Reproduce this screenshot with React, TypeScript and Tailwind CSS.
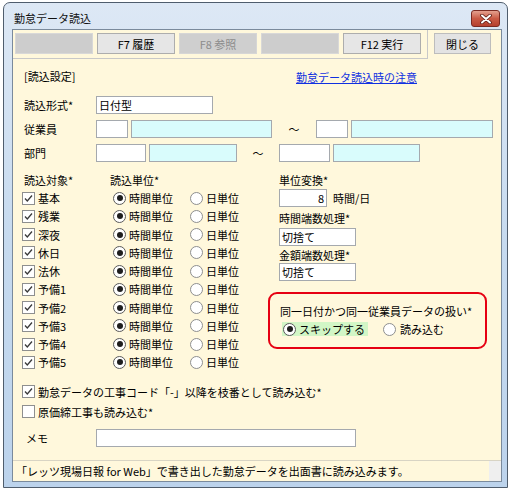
import React from 'react';

const FONT = '"Noto Sans CJK JP", "Liberation Sans", sans-serif';

function Check({ checked = true }: { checked?: boolean }) {
    return (
        <span className="w-[13px] h-[13px] border border-[#8e8f8f] bg-white flex items-center justify-center shrink-0">
            {checked && (
                <svg width="11" height="11" viewBox="0 0 11 11">
                    <path d="M2 5.5 L4.3 8 L9 2.5" fill="none" stroke="#3a3a3a" strokeWidth="1.3" />
                </svg>
            )}
        </span>
    );
}

function Radio({ checked = false }: { checked?: boolean }) {
    return (
        <span className={`w-[13px] h-[13px] rounded-full border bg-white flex items-center justify-center shrink-0 ${checked ? 'border-[#5a5a5a]' : 'border-[#8e8f8f]'}`}>
            {checked && <span className="w-[6px] h-[6px] rounded-full bg-[#1e1e1e]" />}
        </span>
    );
}

function TextBox({ className, value, right }: { className: string; value?: string; right?: boolean }) {
    return (
        <div className={`h-[18px] border border-[#a5a9ae] flex items-center px-[2px] leading-[16px] ${right ? 'justify-end' : ''} ${className}`}>
            {value}
        </div>
    );
}

function ToolButton({ label, disabled }: { label?: string; disabled?: boolean }) {
    if (!label) {
        return <div className="w-[78px] h-[21px] bg-[#cdcdcd] border border-[#d8d8d8]" />;
    }
    return (
        <div className={`w-[78px] h-[21px] flex items-center justify-center border leading-[16px] ${disabled ? 'bg-[#cfcfcf] border-[#d6d6d6] text-[#8c8c8c]' : 'bg-[#e6e6e6] border-[#adadad] text-black'}`}>
            {label}
        </div>
    );
}

const items = ['基本', '残業', '深夜', '休日', '法休', '予備1', '予備2', '予備3', '予備4', '予備5'];

export default function App() {
    return (
        <div className="w-[511px] h-[491px] bg-white overflow-hidden text-[11px] text-black whitespace-nowrap" style={{ fontFamily: FONT }}>
            {/* Window frame */}
            <div className="ml-[3px] mt-[2px] w-[505px] h-[486px] rounded-t-[7px] border border-[#4f5d6d] bg-gradient-to-b from-[#dde8f5] via-[#c6daef] to-[#bcd3ec] flex flex-col pl-[8px] pr-[5px] pb-[5px]">
                {/* Title bar */}
                <div className="h-[26px] flex items-start justify-between">
                    <div className="pl-[2px] mt-[7px] leading-[16px] text-[#111]">勤怠データ読込</div>
                    <div className="mt-[7px] mr-[2px] w-[29px] h-[17px] rounded-[3px] border border-[#7a2a22] bg-gradient-to-b from-[#e3a08f] via-[#c95a45] to-[#b6402e] flex items-center justify-center">
                        <svg width="12" height="10" viewBox="0 0 12 10">
                            <path d="M2 1.5 L10 8.5 M10 1.5 L2 8.5" stroke="#5a1a14" strokeWidth="3.6" strokeLinecap="round" />
                            <path d="M2 1.5 L10 8.5 M10 1.5 L2 8.5" stroke="#ffffff" strokeWidth="2" strokeLinecap="round" />
                        </svg>
                    </div>
                </div>

                {/* Client area */}
                <div className="flex-1 border border-[#7a8a9c] bg-[#fff8dc] flex flex-col">
                    {/* Toolbar */}
                    <div className="flex">
                        <div className="w-[415px] h-[29px] border-b border-r border-[#c8c8c8] flex gap-[4px] pl-[2px] pt-[3px]">
                            <ToolButton />
                            <ToolButton label="F7 履歴" />
                            <ToolButton label="F8 参照" disabled />
                            <ToolButton />
                            <ToolButton label="F12 実行" />
                        </div>
                        <div className="ml-[6px] mt-[3px] w-[57px] h-[21px] bg-[#e3e3e3] border border-[#bdbdbd] flex items-center justify-center leading-[16px]">
                            閉じる
                        </div>
                    </div>

                    {/* Form */}
                    <div className="flex-1 pl-[11px] flex flex-col">
                        <div className="mt-[5px] h-[24px] flex items-center leading-[16px]">
                            <div className="w-[272px]">[読込設定]</div>
                            <div className="text-[#1030e0] underline mt-[2px]">勤怠データ読込時の注意</div>
                        </div>

                        <div className="mt-[5px] h-[24px] flex items-center leading-[16px]">
                            <div className="w-[72px]">読込形式*</div>
                            <TextBox className="w-[117px] bg-white" value="日付型" />
                        </div>

                        <div className="h-[24px] flex items-center leading-[16px]">
                            <div className="w-[72px]">従業員</div>
                            <TextBox className="w-[32px] bg-white" />
                            <TextBox className="ml-[3px] w-[141px] bg-[#d9fcfc]" />
                            <div className="w-[44px] text-center">～</div>
                            <TextBox className="w-[32px] bg-white" />
                            <TextBox className="ml-[3px] w-[142px] bg-[#d9fcfc]" />
                        </div>

                        <div className="h-[24px] flex items-center leading-[16px]">
                            <div className="w-[72px]">部門</div>
                            <TextBox className="w-[50px] bg-white" />
                            <TextBox className="ml-[3px] w-[88px] bg-[#d9fcfc]" />
                            <div className="w-[42px] text-center">～</div>
                            <TextBox className="w-[51px] bg-white" />
                            <TextBox className="ml-[3px] w-[87px] bg-[#d9fcfc]" />
                        </div>

                        {/* Targets + conversion */}
                        <div className="mt-[6px] flex leading-[16px]">
                            <div className="w-[255px] flex flex-col">
                                <div className="h-[18px] flex items-center">
                                    <div className="w-[86px]">読込対象*</div>
                                    <div>読込単位*</div>
                                </div>
                                {items.map((name) => (
                                    <div key={name} className="h-[18.25px] flex items-center">
                                        <div className="w-[91px] -ml-[2px] flex items-center gap-[3px]">
                                            <Check />
                                            <span>{name}</span>
                                        </div>
                                        <div className="w-[77px] flex items-center gap-[3px]">
                                            <Radio checked />
                                            <span>時間単位</span>
                                        </div>
                                        <div className="flex items-center gap-[3px]">
                                            <Radio />
                                            <span>日単位</span>
                                        </div>
                                    </div>
                                ))}
                            </div>

                            <div className="flex flex-col">
                                <div className="h-[18px] flex items-center">単位変換*</div>
                                <div className="flex items-center">
                                    <TextBox className="w-[48px] h-[17px] bg-white" value="8" right />
                                    <span className="ml-[6px]">時間/日</span>
                                </div>
                                <div className="h-[21px] flex items-center">時間端数処理*</div>
                                <TextBox className="w-[77px] bg-white" value="切捨て" />
                                <div className="h-[17px] flex items-center">金額端数処理*</div>
                                <TextBox className="w-[77px] bg-white" value="切捨て" />

                                <div className="mt-[11px] -ml-[11px] w-[219px] h-[57px] border-2 border-[#e60012] rounded-[9px] pl-[10px] pt-[8px] flex flex-col">
                                    <div className="h-[18px] flex items-center">同一日付かつ同一従業員データの扱い*</div>
                                    <div className="h-[18px] flex items-center">
                                        <div className="ml-[2px] w-[86px] h-[14px] bg-[#d2f6c6] flex items-center gap-[3px] pl-[1px]">
                                            <Radio checked />
                                            <span>スキップする</span>
                                        </div>
                                        <div className="ml-[15px] flex items-center gap-[4px]">
                                            <Radio />
                                            <span>読み込む</span>
                                        </div>
                                    </div>
                                </div>
                            </div>
                        </div>

                        <div className="mt-[10px] h-[20px] flex items-center gap-[3px] -ml-[2px] leading-[16px]">
                            <Check />
                            <span>勤怠データの工事コード「-」以降を枝番として読み込む*</span>
                        </div>
                        <div className="h-[20px] flex items-center gap-[3px] -ml-[2px] leading-[16px]">
                            <Check checked={false} />
                            <span>原価締工事も読み込む*</span>
                        </div>

                        <div className="mt-[4px] h-[24px] flex items-center leading-[16px]">
                            <div className="w-[72px] pl-[2px]">メモ</div>
                            <TextBox className="w-[260px] h-[17px] bg-white" />
                        </div>
                    </div>

                    {/* Status bar */}
                    <div className="h-[21px] border-t border-[#d8d4c4] flex items-center">
                        <div className="flex-1 pl-[3px] leading-[16px] overflow-hidden">
                            「レッツ現場日報 for Web」で書き出した勤怠データを出面書に読み込みます。
                        </div>
                        <div className="w-[12px] h-full bg-[#efefef]" />
                    </div>
                </div>
            </div>
        </div>
    );
}
